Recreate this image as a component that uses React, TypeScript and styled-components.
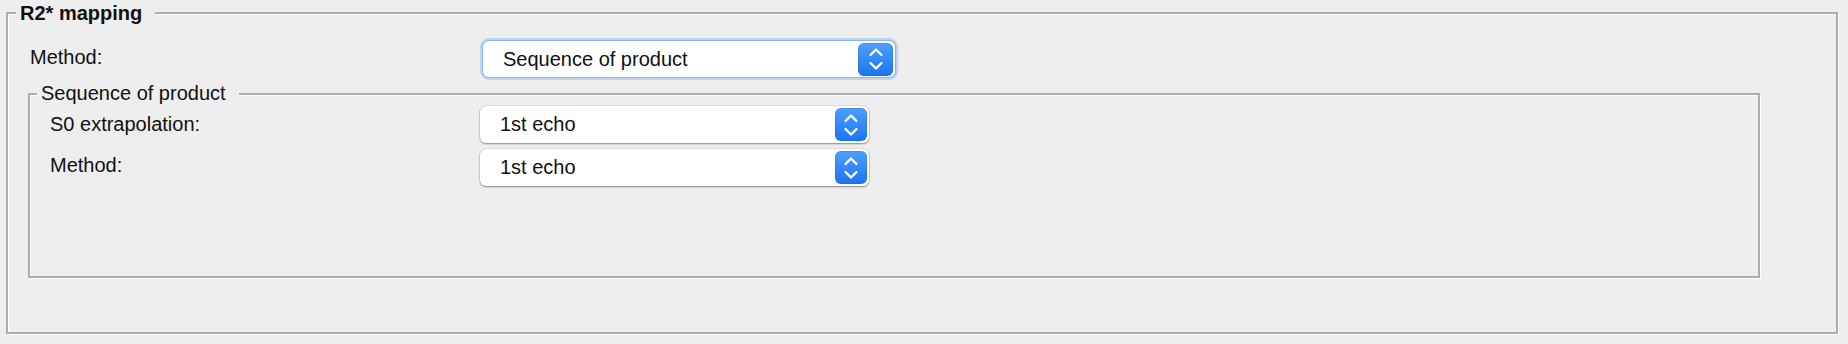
import React from "react";
import styled, { createGlobalStyle, css } from "styled-components";

const GlobalStyle = createGlobalStyle`
  html, body {
    margin: 0;
    padding: 0;
    background: #eeeeee;
  }
  body {
    width: 1848px;
    height: 344px;
    overflow: hidden;
    font-family: "Liberation Sans", Arial, Helvetica, sans-serif;
    color: #111;
  }
`;

const Page = styled.div`
  box-sizing: border-box;
  width: 1848px;
  height: 344px;
  padding: 12px 10px 0 6px;
`;

const etched = css`
  box-sizing: border-box;
  border: 2px solid #adadad;
  box-shadow: inset 1px 1px 0 #ffffff, 1px 1px 0 #ffffff;
  display: flex;
  flex-direction: column;
  align-items: flex-start;
`;

const OuterGroup = styled.section`
  ${etched};
  width: 100%;
  height: 322px;
`;

const InnerGroup = styled.section`
  ${etched};
  width: 1732px;
  height: 185px;
  margin: 16px 0 0 20px;
`;

const Legend = styled.div<{ $bold?: boolean; $lift: number; $indent: number }>`
  margin: ${(p) => -p.$lift}px 0 0 ${(p) => p.$indent}px;
  padding: 0 13px 0 4px;
  background: #eeeeee;
  font-size: 20px;
  line-height: 24px;
  font-weight: ${(p) => (p.$bold ? 700 : 400)};
  white-space: nowrap;
`;

const Row = styled.div<{ $top: number }>`
  display: flex;
  align-items: center;
  margin-top: ${(p) => p.$top}px;
`;

const Label = styled.div<{ $width: number; $indent: number; $nudge?: number }>`
  box-sizing: border-box;
  width: ${(p) => p.$width}px;
  padding-left: ${(p) => p.$indent}px;
  font-size: 20px;
  line-height: 24px;
  position: relative;
  top: ${(p) => p.$nudge ?? 0}px;
  white-space: nowrap;
`;

const SelectBox = styled.div<{ $width: number; $height: number; $focused?: boolean }>`
  box-sizing: border-box;
  width: ${(p) => p.$width}px;
  height: ${(p) => p.$height}px;
  display: flex;
  align-items: center;
  justify-content: space-between;
  padding: 0 2px 0 20px;
  background: #ffffff;
  border-radius: 6px;
  font-size: 20px;
  color: #111;
  ${(p) =>
    p.$focused
      ? css`
          box-shadow: 0 0 0 1px #8db5ec, 0 0 0 3px rgba(150, 190, 240, 0.55);
        `
      : css`
          box-shadow: 0 0 0 0.5px rgba(0, 0, 0, 0.12), 0 1px 2px rgba(0, 0, 0, 0.38);
        `}
`;

const StepperButton = styled.div<{ $width: number }>`
  width: ${(p) => p.$width}px;
  height: 33px;
  border-radius: 6px;
  background: linear-gradient(#4e9ffb, #1a75f3);
  display: flex;
  align-items: center;
  justify-content: center;
  box-shadow: inset 0 0 0 0.5px rgba(0, 60, 160, 0.25);
`;

const Chevrons = () => (
  <svg width="16" height="26" viewBox="0 0 16 26" fill="none">
    <path
      d="M2.5 9 L8 3.5 L13.5 9"
      stroke="#fff"
      strokeWidth="2.3"
      strokeLinecap="round"
      strokeLinejoin="round"
    />
    <path
      d="M2.5 17 L8 22.5 L13.5 17"
      stroke="#fff"
      strokeWidth="2.3"
      strokeLinecap="round"
      strokeLinejoin="round"
    />
  </svg>
);

type SelectProps = {
  value: string;
  width: number;
  height: number;
  buttonWidth: number;
  focused?: boolean;
};

const Select = ({ value, width, height, buttonWidth, focused }: SelectProps) => (
  <SelectBox $width={width} $height={height} $focused={focused} role="combobox">
    <span>{value}</span>
    <StepperButton $width={buttonWidth}>
      <Chevrons />
    </StepperButton>
  </SelectBox>
);

export default function App() {
  return (
    <>
      <GlobalStyle />
      <Page>
        <OuterGroup>
          <Legend $bold $lift={13} $indent={8}>
            R2* mapping
          </Legend>
          <Row $top={16}>
            <Label $width={475} $indent={22} $nudge={-2}>
              Method:
            </Label>
            <Select value="Sequence of product" width={412} height={36} buttonWidth={35} focused />
          </Row>
          <InnerGroup>
            <Legend $lift={14} $indent={7}>
              Sequence of product
            </Legend>
            <Row $top={1}>
              <Label $width={450} $indent={20} $nudge={-1}>
                S0 extrapolation:
              </Label>
              <Select value="1st echo" width={389} height={37} buttonWidth={32} />
            </Row>
            <Row $top={6}>
              <Label $width={450} $indent={20} $nudge={-3}>
                Method:
              </Label>
              <Select value="1st echo" width={389} height={37} buttonWidth={32} />
            </Row>
          </InnerGroup>
        </OuterGroup>
      </Page>
    </>
  );
}
